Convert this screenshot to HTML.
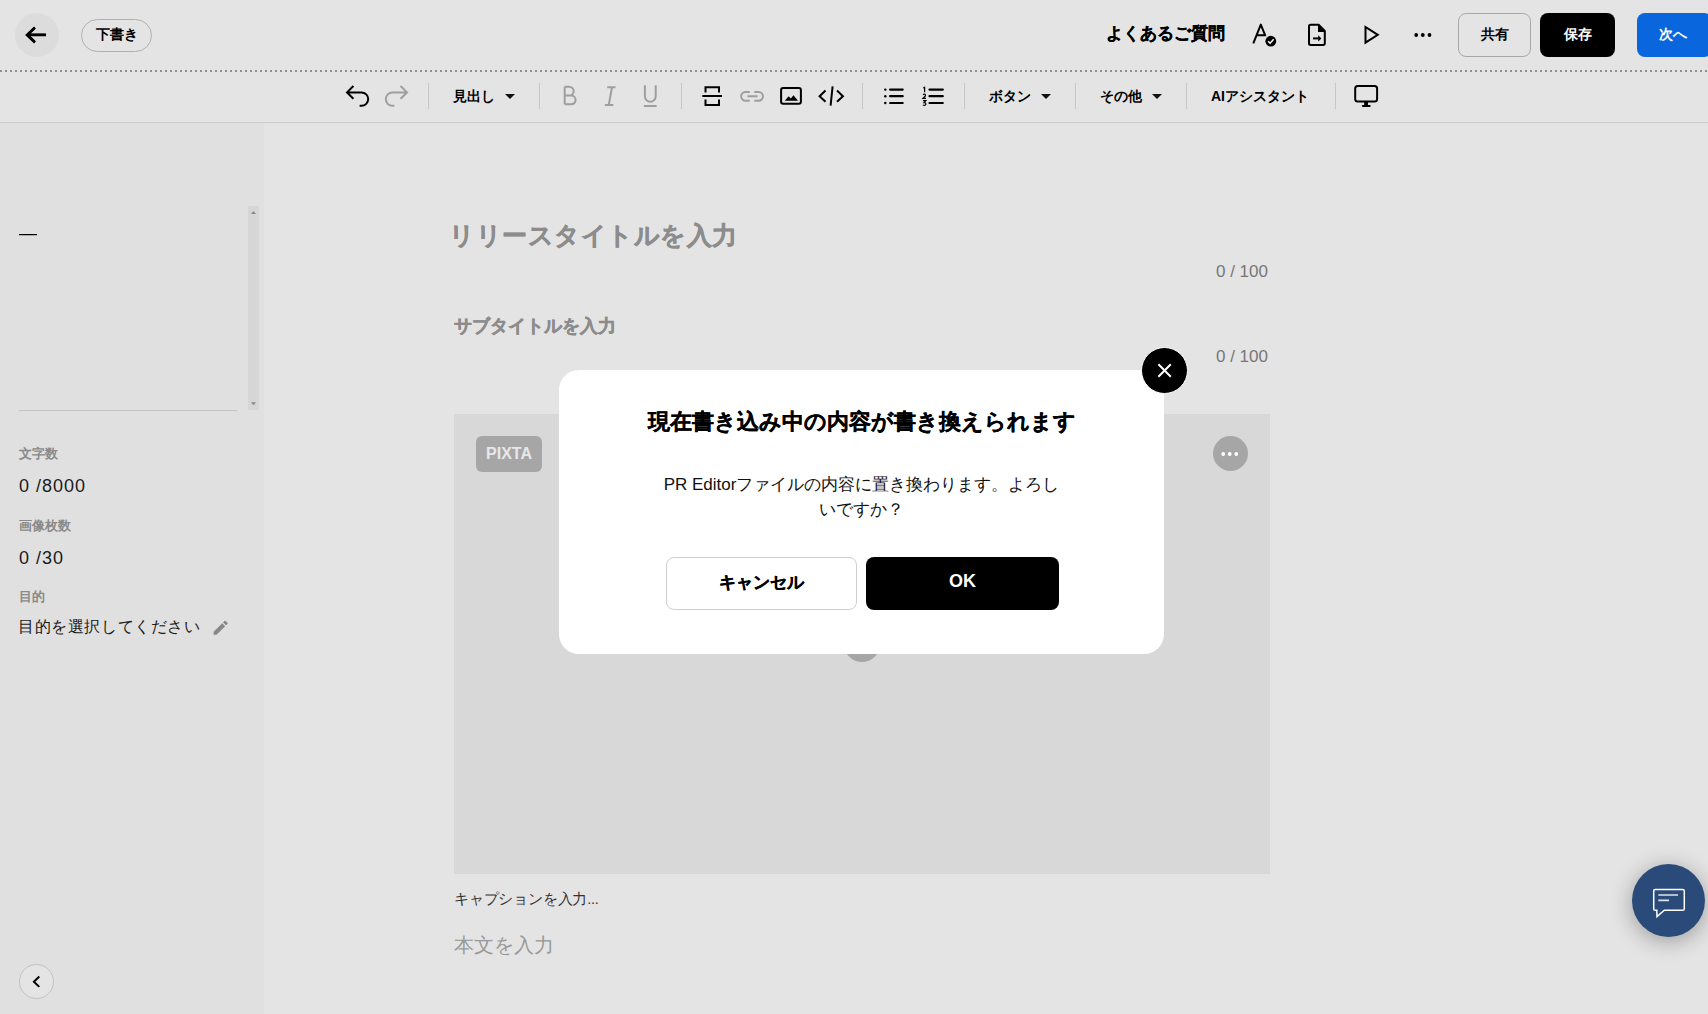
<!DOCTYPE html>
<html><head><meta charset="utf-8">
<style>
*{box-sizing:border-box;margin:0;padding:0}
html,body{width:1708px;height:1014px;overflow:hidden}
body{font-family:"Liberation Sans",sans-serif;background:#e4e4e4;position:relative;color:#000}
.abs{position:absolute}
#topbar{left:0;top:70px;width:1708px;height:2px;background:repeating-linear-gradient(to right,#8f8f8f 0 2px,transparent 2px 5px)}
#toolbar{left:0;top:72px;width:1708px;height:51px;border-bottom:1px solid #cdcdcd}
.sep{position:absolute;top:83px;width:1px;height:26px;background:#c6c6c6}
.tb{position:absolute;font-size:14px;font-weight:bold;line-height:16px;white-space:nowrap}
.caret{position:absolute;width:0;height:0;border-left:5px solid transparent;border-right:5px solid transparent;border-top:5px solid #111}
#sidebar{left:0;top:123px;width:264px;height:891px;background:#e0e0e0}
.lbl{position:absolute;left:19px;font-size:13px;font-weight:bold;color:#8a8a8a;line-height:14px}
.val{position:absolute;left:19px;font-size:18px;color:#1a1a1a;line-height:20px;white-space:nowrap;letter-spacing:1px}
.bs{-webkit-text-stroke:0.25px currentColor}
.bs4{-webkit-text-stroke:0.45px currentColor}
#dialog{left:559px;top:370px;width:605px;height:284px;background:#fff;border-radius:20px}
</style></head><body>

<!-- top bar -->
<div id="topbar" class="abs"></div>
<div class="abs" style="left:15px;top:13px;width:44px;height:44px;border-radius:50%;background:#dcdcdc"></div>
<svg class="abs" style="left:24px;top:25px" width="24" height="20" viewBox="0 0 24 20"><path d="M22 10H3M11 2.5L3 10l8 7.5" fill="none" stroke="#000" stroke-width="2.6"/></svg>
<div class="abs" style="left:81px;top:19px;width:71px;height:33px;border:1px solid #b0b0b0;border-radius:17px;font-size:14px;font-weight:bold;line-height:29px;text-align:center">下書き</div>

<div class="bs abs tb" style="left:1106px;top:25px;font-size:17px;line-height:18px">よくあるご質問</div>

<div class="abs" style="left:1458px;top:13px;width:73px;height:44px;border:1px solid #a8a8a8;border-radius:8px;font-size:14px;font-weight:bold;line-height:40px;text-align:center">共有</div>
<div class="abs" style="left:1540px;top:13px;width:75px;height:44px;background:#000;color:#fff;border-radius:8px;font-size:14px;font-weight:bold;line-height:42px;text-align:center">保存</div>
<div class="abs" style="left:1637px;top:13px;width:75px;height:44px;background:#0966dd;color:#fff;border-radius:8px;font-size:14px;font-weight:bold;line-height:42px;text-align:center;padding-right:4px">次へ</div>

<!-- toolbar -->
<div id="toolbar" class="abs"></div>
<div class="sep" style="left:428px"></div>
<div class="sep" style="left:539px"></div>
<div class="sep" style="left:681px"></div>
<div class="sep" style="left:862px"></div>
<div class="sep" style="left:964px"></div>
<div class="sep" style="left:1075px"></div>
<div class="sep" style="left:1186px"></div>
<div class="sep" style="left:1335px"></div>

<div class="tb" style="left:453px;top:88px">見出し</div><div class="caret" style="left:505px;top:94px"></div>
<div class="tb" style="left:989px;top:88px">ボタン</div><div class="caret" style="left:1041px;top:94px"></div>
<div class="tb" style="left:1100px;top:88px">その他</div><div class="caret" style="left:1152px;top:94px"></div>
<div class="tb" style="left:1211px;top:88px">AIアシスタント</div>

<!-- sidebar -->
<div id="sidebar" class="abs"></div>
<div class="abs" style="left:19px;top:234px;width:18px;height:1px;background:#000;box-shadow:0 1px 0 rgba(0,0,0,.25)"></div>
<div class="abs" style="left:248px;top:206px;width:11px;height:204px;background:#d6d6d6"></div>
<div class="abs" style="left:19px;top:410px;width:218px;height:1px;background:#c4c4c4"></div>
<div class="lbl" style="top:447px">文字数</div>
<div class="val" style="top:476px">0 /8000</div>
<div class="lbl" style="top:519px">画像枚数</div>
<div class="val" style="top:548px">0 /30</div>
<div class="lbl" style="top:590px">目的</div>
<div class="val" style="top:617px;font-size:16px;letter-spacing:0.6px;left:18px">目的を選択してください</div>
<div class="abs" style="left:19px;top:964px;width:35px;height:35px;border:1px solid #c2c2c2;border-radius:50%;background:#e4e4e4"></div>

<!-- main -->
<div class="abs bs4" style="left:449px;top:221px;font-size:25px;letter-spacing:0.5px;font-weight:bold;color:#8c8c8c;line-height:28px;white-space:nowrap">リリースタイトルを入力</div>
<div class="abs" style="left:1216px;top:262px;font-size:17px;color:#777;line-height:19px">0 / 100</div>
<div class="abs bs4" style="left:454px;top:316px;font-size:18px;font-weight:bold;color:#8c8c8c;line-height:20px;white-space:nowrap">サブタイトルを入力</div>
<div class="abs" style="left:1216px;top:347px;font-size:17px;color:#777;line-height:19px">0 / 100</div>
<div class="abs" style="left:454px;top:414px;width:816px;height:460px;background:#d8d8d8"></div>
<div class="abs" style="left:476px;top:436px;width:66px;height:36px;border-radius:6px;background:#a6a6a6;color:#e8e8e8;font-size:16px;font-weight:bold;line-height:36px;text-align:center">PIXTA</div>
<div class="abs" style="left:1213px;top:436px;width:35px;height:35px;border-radius:50%;background:#a6a6a6"></div>
<div class="abs" style="left:844px;top:626px;width:36px;height:36px;border-radius:50%;background:#a6a6a6"></div>
<div class="abs" style="left:454px;top:891px;font-size:14.5px;letter-spacing:-0.2px;color:#333;line-height:17px;white-space:nowrap">キャプションを入力...</div>
<div class="abs" style="left:454px;top:934px;font-size:20px;color:#999;line-height:22px;white-space:nowrap">本文を入力</div>

<div class="abs" style="left:1632px;top:864px;width:73px;height:73px;border-radius:50%;background:#2a4b7a;box-shadow:0 4px 22px rgba(0,0,0,0.32)"></div>


<svg class="abs" style="left:0;top:0" width="1708" height="1014" viewBox="0 0 1708 1014" fill="none">
<!-- back arrow -->
<path d="M45.8 34.7H27.8M34.6 27.9L27.8 34.7L34.6 41.5" stroke="#000" stroke-width="2.2"/>
<!-- spellcheck A -->
<path d="M1253.3 43.4L1260.8 24.6L1265.2 35.3H1257.3" stroke="#000" stroke-width="2" stroke-linejoin="round"/>
<circle cx="1270.8" cy="41.2" r="5.4" fill="#000"/>
<path d="M1268.1 41.3L1270.1 43.2L1273.6 39.3" stroke="#fff" stroke-width="1.5"/>
<!-- file export -->
<path d="M1318.6 24.8H1310.6Q1309 24.8 1309 26.4V43.3Q1309 44.9 1310.6 44.9H1323.2Q1324.8 44.9 1324.8 43.3V31Z" stroke="#000" stroke-width="2" stroke-linejoin="round"/>
<path d="M1318 24.5V32H1325.5Z" fill="#000"/>
<path d="M1313 38.4H1318.6" stroke="#000" stroke-width="2"/>
<path d="M1318.2 35.3L1321.4 38.4L1318.2 41.5Z" fill="#000"/>
<!-- play -->
<path d="M1365.5 27L1365.5 42.6L1377.8 34.8Z" stroke="#000" stroke-width="2"/>
<!-- more -->
<circle cx="1416.2" cy="35" r="1.9" fill="#000"/><circle cx="1422.8" cy="35" r="1.9" fill="#000"/><circle cx="1429.5" cy="35" r="1.9" fill="#000"/>
<!-- undo / redo -->
<path d="M353.4 86L347 92.4L353.4 98.8M347 92.4H361.5A6.7 6.7 0 0 1 361.5 105.8H359.6" stroke="#000" stroke-width="2"/>
<path d="M400.6 86L407 92.4L400.6 98.8M407 92.4H392.5A6.7 6.7 0 0 0 392.5 105.8H394.4" stroke="#9e9e9e" stroke-width="2"/>
<!-- B I U -->
<path d="M564.7 86.8V104.2M564.7 86.8H569.3A4.4 4.4 0 0 1 569.3 95.6H564.7M564.7 95.6H571.3A4.3 4.3 0 0 1 571.3 104.2H564.7" stroke="#9e9e9e" stroke-width="2"/>
<path d="M607.2 87.3H615.5M604.9 104.9H613.3M612 87.3L608.8 104.9" stroke="#9e9e9e" stroke-width="2"/>
<path d="M644.9 85.2V96.3A5.4 5.4 0 0 0 655.7 96.3V85.2M643.9 106H656.7" stroke="#9e9e9e" stroke-width="2"/>
<!-- hr -->
<path d="M702.3 96H722M705.5 92.6V87.2H719V92.6M705.5 99.4V104.9H719V99.4" stroke="#000" stroke-width="2"/>
<!-- link -->
<path d="M749.8 91.9H745.6A4.45 4.45 0 0 0 745.6 100.8H749.8M754.3 91.9H758.5A4.45 4.45 0 0 1 758.5 100.8H754.3M747.4 96.35H757.6" stroke="#9e9e9e" stroke-width="2"/>
<!-- image -->
<rect x="781.1" y="88.1" width="19.8" height="15.6" rx="2" stroke="#000" stroke-width="2"/>
<path d="M784.8 100.7L788.6 96.3L790.8 98.6L793.5 95.2L798 100.7Z" fill="#000"/>
<!-- code -->
<path d="M825.5 90.6L819.6 96.2L825.5 101.8M837 90.6L842.9 96.2L837 101.8M832.6 86.4L830.6 105.7" stroke="#000" stroke-width="2"/>
<!-- bullet list -->
<circle cx="885.3" cy="89.6" r="1.2" fill="#000"/><circle cx="885.3" cy="96.2" r="1.2" fill="#000"/><circle cx="885.3" cy="103" r="1.2" fill="#000"/>
<path d="M890.1 89.6H902.7M890.1 96.2H902.7M890.1 103H902.7" stroke="#000" stroke-width="2.2" stroke-linecap="round"/>
<!-- numbered list -->
<path d="M923.2 88L924.6 87.3V92.3M922.9 94.6Q925.9 93.4 925.4 95.9L923 98.3H926M922.9 100.6H925.8L924 102.6Q926.3 102.6 925.8 104.6Q924.6 105.9 922.9 105" stroke="#000" stroke-width="1.2"/>
<path d="M929.5 89.6H942.8M929.5 96.2H942.8M929.5 103H942.8" stroke="#000" stroke-width="2.2" stroke-linecap="round"/>
<!-- monitor -->
<rect x="1355.2" y="86" width="21.9" height="15.6" rx="2.5" stroke="#000" stroke-width="2"/>
<rect x="1364.2" y="102" width="3.8" height="3.5" fill="#000"/>
<rect x="1361.9" y="104.9" width="8.8" height="2.2" rx="1" fill="#000"/>
<!-- scroll arrows -->
<path d="M251 214L253.5 211L256 214Z" fill="#8a8a8a"/>
<path d="M251 402.2L256 402.2L253.5 405.2Z" fill="#8a8a8a"/>
<!-- pencil -->
<path transform="translate(211.3 618.4) scale(0.78)" d="M3 17.25V21h3.75L17.81 9.94l-3.75-3.75L3 17.25zM20.71 7.04a.996.996 0 0 0 0-1.41l-2.34-2.34a.996.996 0 0 0-1.41 0l-1.83 1.83 3.75 3.75 1.83-1.83z" fill="#888"/>
<!-- collapse chevron -->
<path d="M39.3 976.5L33.9 981.7L39.3 986.9" stroke="#000" stroke-width="2"/>
<!-- image more dots -->
<circle cx="1223.2" cy="454" r="1.9" fill="#fff"/><circle cx="1229.7" cy="454" r="1.9" fill="#fff"/><circle cx="1236.3" cy="454" r="1.9" fill="#fff"/>
<!-- chat icon -->
<path d="M1656.8 910.3H1655.3Q1653.7 910.3 1653.7 908.7V891.1Q1653.7 889.5 1655.3 889.5H1682.7Q1684.3 889.5 1684.3 891.1V908.7Q1684.3 910.3 1682.7 910.3H1664.3L1657 916.6Z" stroke="#fff" stroke-width="1.5"/>
<path d="M1658.3 895H1678M1658.3 900.4H1669" stroke="#dfe3ea" stroke-width="1.6"/>
</svg>

<!-- dialog -->
<div id="dialog" class="abs"></div>
<div class="abs" style="left:1141px;top:347px;width:47px;height:47px;border-radius:50%;background:#000;border:1px solid #fff"></div>
<svg class="abs" style="left:1141px;top:347px" width="47" height="47" viewBox="1141 347 47 47" fill="none"><path d="M1158.4 364.3L1170.8 376.7M1170.8 364.3L1158.4 376.7" stroke="#fff" stroke-width="2"/></svg>
<div class="bs abs" style="left:559px;top:408px;width:605px;text-align:center;font-size:22px;font-weight:bold;line-height:28px">現在書き込み中の内容が書き換えられます</div>
<div class="abs" style="left:559px;top:472px;width:605px;padding:0 100px;text-align:center;font-size:17px;line-height:25px;color:#111">PR Editorファイルの内容に置き換わります。よろしいですか？</div>
<div class="bs abs" style="left:666px;top:557px;width:191px;height:53px;border:1px solid #cfcfcf;border-radius:8px;font-size:17px;font-weight:bold;line-height:49px;text-align:center">キャンセル</div>
<div class="abs" style="left:866px;top:557px;width:193px;height:53px;background:#000;color:#fff;border-radius:8px;font-size:18px;font-weight:bold;line-height:49px;text-align:center">OK</div>

</body></html>
